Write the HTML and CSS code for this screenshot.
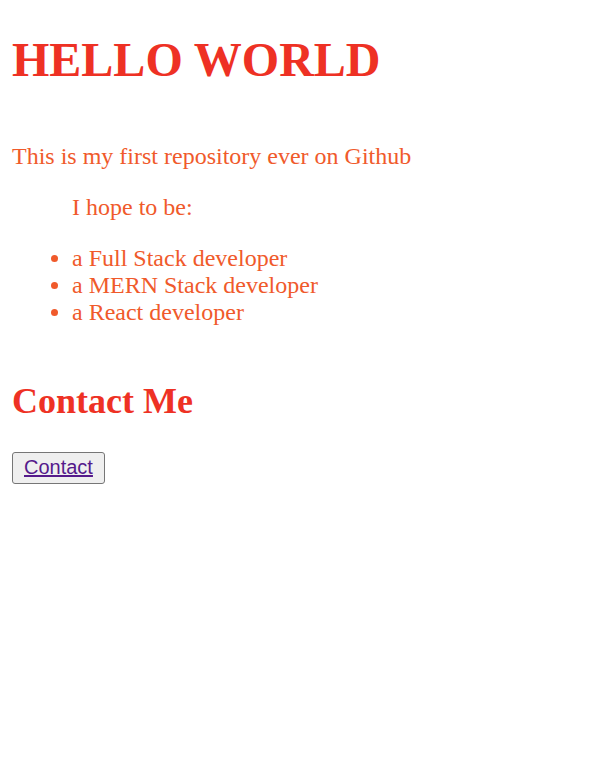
FILE: index.html
```html
<!DOCTYPE html>
<html>
<head>
<meta charset="utf-8">
<link rel="stylesheet" href="styles.css">
</head>
<body>
<h1 class="title">HELLO WORLD</h1>
<p class="text">This is my first repository ever on Github</p>
<p class="text indent">I hope to be:</p>
<ul class="list">
<li>a Full Stack developer</li>
<li>a MERN Stack developer</li>
<li>a React developer</li>
</ul>
<h2 class="subtitle">Contact Me</h2>
<button class="btn"><a class="btn-link" href="#">Contact</a></button>
</body>
</html>
```
FILE: styles.css
```css
html, body {
  background: #ffffff;
}
body {
  margin: 0;
  padding: 12px;
  font-family: "Liberation Serif", "Times New Roman", serif;
  font-size: 24px;
}
.title {
  font-size: 48px;
  margin: 20px 0 56px;
  color: #ee3124;
  font-weight: bold;
}
.text {
  margin: 24px 0;
  color: #f05a2b;
}
.indent {
  margin-left: 60px;
}
.list {
  margin: 24px 0 54px;
  padding-left: 60px;
  color: #f05a2b;
}
.subtitle {
  font-size: 36px;
  margin: 30px 0;
  color: #ee3124;
}
.btn {
  font-family: "Liberation Sans", Arial, sans-serif;
  font-size: 20px;
  padding: 3px 11px 4px;
  border: 1.5px solid #767676;
  border-radius: 3px;
  background: #efefef;
}
.btn-link {
  color: #551a8b;
  text-decoration: underline;
}
```
